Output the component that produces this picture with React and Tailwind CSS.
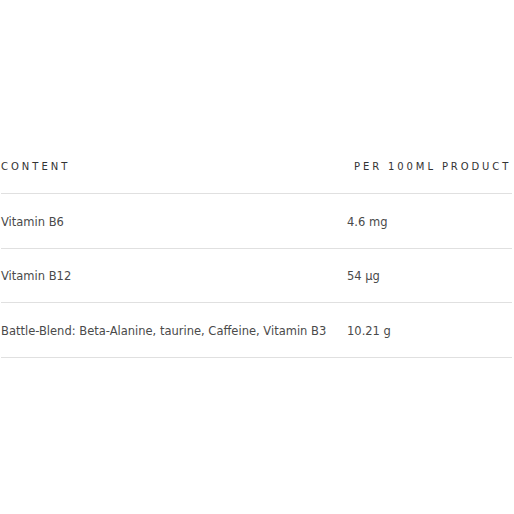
export default function App() {
  const rows = [
    ["Vitamin B6", "4.6 mg"],
    ["Vitamin B12", "54 µg"],
    ["Battle-Blend: Beta-Alanine, taurine, Caffeine, Vitamin B3", "10.21 g"],
  ];
  return (
    <div className="w-[514px] h-[514px] bg-white pt-[139px]" style={{ fontFamily: '"DejaVu Sans", sans-serif' }}>
      <div className="w-[512px] pl-px">
        <div className="grid grid-cols-[346px_1fr] h-[55px] items-center border-b border-[#e0e0e0] text-[10px] tracking-[3px] text-[#333]">
          <div>CONTENT</div>
          <div className="pl-[7px] whitespace-nowrap tracking-[2.9px]">PER 100ML PRODUCT</div>
        </div>
        {rows.map(([a, b]) => (
          <div key={a} className="grid grid-cols-[346px_1fr] h-[54.5px] items-center pt-[3px] border-b border-[#e0e0e0] text-[11.5px] text-[#4a4a4a]">
            <div className="whitespace-nowrap">{a}</div>
            <div>{b}</div>
          </div>
        ))}
      </div>
    </div>
  );
}
